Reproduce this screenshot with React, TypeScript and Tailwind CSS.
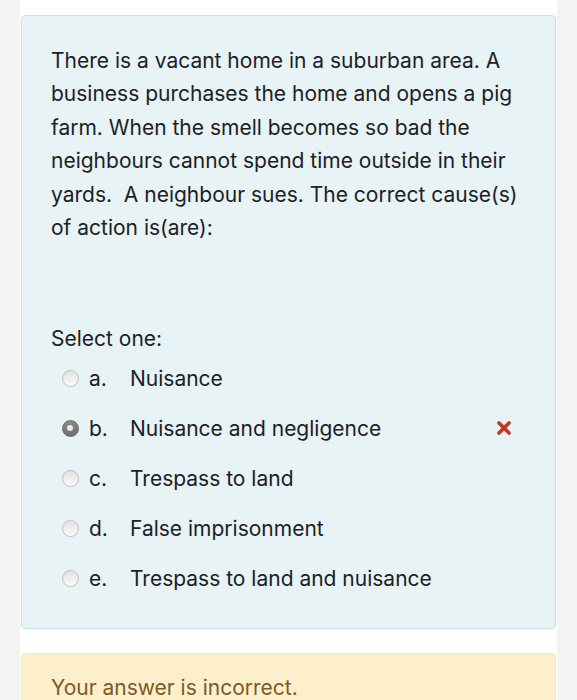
import React from "react";

const options = [
  { l: "a.", t: "Nuisance", checked: false, wrong: false },
  { l: "b.", t: "Nuisance and negligence", checked: true, wrong: true },
  { l: "c.", t: "Trespass to land", checked: false, wrong: false },
  { l: "d.", t: "False imprisonment", checked: false, wrong: false },
  { l: "e.", t: "Trespass to land and nuisance", checked: false, wrong: false },
];

function Radio({ checked }: { checked: boolean }) {
  if (checked) {
    return (
      <span className="w-[17px] h-[17px] rounded-full bg-gradient-to-b from-[#8a8a8a] to-[#6f6f6f] border border-[#6a6a6a] flex items-center justify-center">
        <span className="w-[6px] h-[6px] rounded-full bg-[#e8e8e8]" />
      </span>
    );
  }
  return (
    <span className="w-[17px] h-[17px] rounded-full bg-gradient-to-b from-[#e2e2e2] to-[#fbfbfb] border border-[#bdbdbd]" />
  );
}

export default function App() {
  return (
    <div
      className="min-h-[700px] bg-[#f3f3f3] flex justify-center"
      style={{ fontFamily: "Inter, 'Noto Sans', sans-serif" }}
    >
      <div className="w-[537px] bg-white pt-[15px] pb-[40px]">
        <div className="mx-[1px] bg-[#e7f3f5] border border-[#c7e4ea] rounded-[4px] pl-[29px] pr-[24px] pt-[28px] pb-[25px] text-[#1d2125]">
          <p className="text-[21px] leading-[33.4px]">
            There is a vacant home in a suburban area. A business purchases the home and opens a pig farm. When the smell becomes so bad the neighbours cannot spend time outside in their yards.&nbsp; A neighbour sues. The correct cause(s) of action is(are):
          </p>
          <div className="h-[78px]" />
          <div className="text-[21px] leading-[33px]">Select one:</div>
          <div className="-mt-[2px] flex flex-col">
            {options.map((o) => (
              <div key={o.l} className="h-[50px] flex items-center text-[21px]">
                <span className="w-[38px] flex justify-center">
                  <Radio checked={o.checked} />
                </span>
                <span className="w-[41px]">{o.l}</span>
                <span className="flex-1">{o.t}</span>
                {o.wrong && (
                  <span className="mr-[20px]">
                    <svg width="14" height="14" viewBox="0 0 14 14">
                      <path d="M2 2 L12 12 M12 2 L2 12" stroke="#ca3120" strokeWidth="3.6" strokeLinecap="round" />
                    </svg>
                  </span>
                )}
              </div>
            ))}
          </div>
        </div>
        <div className="mx-[1px] mt-[24px] bg-[#fcefc9] border border-[#fbe8c6] rounded-[4px] px-[29px] pt-[18px] pb-[30px] text-[21px] text-[#7d5a29]">
          Your answer is incorrect.
        </div>
      </div>
    </div>
  );
}
